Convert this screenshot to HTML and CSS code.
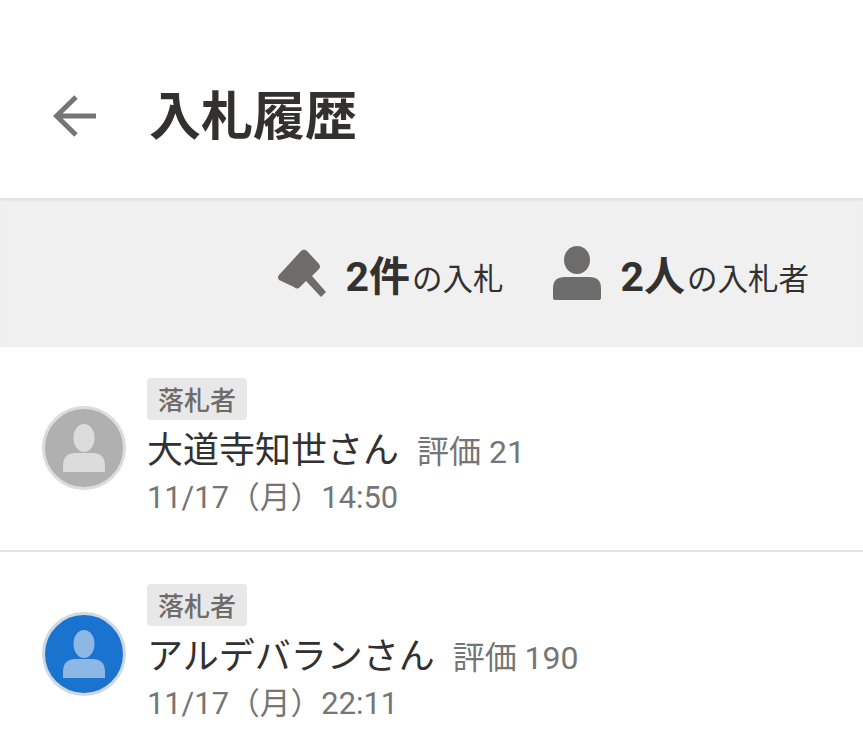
FILE: index.html
```html
<!DOCTYPE html>
<html lang="ja">
<head>
    <meta charset="UTF-8">
    <meta name="viewport" content="width=device-width, initial-scale=1.0">
    <title>入札履歴</title>
    <link rel="stylesheet" href="styles.css">
</head>
<body>

    <header class="header">
        <svg class="back" viewBox="0 0 44 42" aria-hidden="true">
            <path d="M23 2 3.500 21 23 40M3.500 21H43" fill="none" stroke="#757575" stroke-width="5"/>
        </svg>
        <h1>入札履歴</h1>
    </header>

    <section class="stats">
        <div class="stat">
            <svg class="stat-icon gavel" viewBox="0 0 48 50" aria-hidden="true">
                <path d="M1 27 23 3q3-3 6 0l12 13q2 3 0 5l-7 7 14 16-5 5-15-16-6 6q-3 3-6 0L1 32q-2-3 0-5z" fill="#6d6c6a"/>
            </svg>
            <span class="count">2件</span><span class="unit">の入札</span>
        </div>
        <div class="stat">
            <svg class="stat-icon person" viewBox="0 0 48 54" aria-hidden="true">
                <ellipse cx="24" cy="14" rx="13" ry="14" fill="#6d6c6a"/>
                <path d="M0 52V42q0-11 12-11h24q12 0 12 11v10q0 2-2 2H2q-2 0-2-2z" fill="#6d6c6a"/>
            </svg>
            <span class="count">2人</span><span class="unit">の入札者</span>
        </div>
    </section>

    <ul class="bids">
        <li class="bid">
            <div class="avatar avatar-grey">
                <svg viewBox="0 0 42 48" aria-hidden="true">
                    <ellipse cx="21" cy="14" rx="10.500" ry="14" fill="#dcdcdc"/>
                    <path d="M0 48v-6q0-13 13-13h16q13 0 13 13v6z" fill="#dcdcdc"/>
                </svg>
            </div>
            <div class="bid-body">
                <span class="badge">落札者</span>
                <p class="bidder">大道寺知世さん<span class="rating">評価 21</span></p>
                <p class="date">11/17（月）14:50</p>
            </div>
        </li>
        <li class="bid">
            <div class="avatar avatar-blue">
                <svg viewBox="0 0 42 48" aria-hidden="true">
                    <ellipse cx="21" cy="14" rx="10.500" ry="14" fill="#8db8e6"/>
                    <path d="M0 48v-6q0-13 13-13h16q13 0 13 13v6z" fill="#8db8e6"/>
                </svg>
            </div>
            <div class="bid-body">
                <span class="badge">落札者</span>
                <p class="bidder">アルデバランさん<span class="rating">評価 190</span></p>
                <p class="date">11/17（月）22:11</p>
            </div>
        </li>
    </ul>

</body>
</html>
```

FILE: styles.css
```css
* {
    box-sizing: border-box;
}

html, body {
    height: 100%;
}

body {
    margin: 0;
    overflow: hidden;
    background: #fff;
    color: #333130;
    font-family: Roboto, "Noto Sans CJK JP", sans-serif;
}

.header {
    display: flex;
    align-items: center;
    gap: 52px;
    height: 199px;
    padding: 38px 0 0 53px;
    border-bottom: 1px solid #e2e2e2;
}

.back {
    width: 44px;
    height: 42px;
    flex: none;
    margin-bottom: 5px;
}

h1 {
    margin: 0;
    font-size: 52px;
    font-weight: 700;
    line-height: 1.2;
}

.stats {
    display: flex;
    justify-content: flex-end;
    align-items: center;
    gap: 50px;
    height: 148px;
    padding: 0 54px 0 0;
    background: #f0f0f0;
    box-shadow: inset 0 3px 3px -2px #dcdcdc;
}

.stat {
    display: flex;
    align-items: center;
}

.stat-icon {
    flex: none;
    margin-right: 19px;
}

.gavel {
    width: 48px;
    height: 50px;
}

.person {
    width: 48px;
    height: 54px;
}

.count {
    font-size: 41px;
    font-weight: 700;
}

.unit {
    margin-left: 2px;
    padding-top: 8px;
    font-size: 30.5px;
}

.bids {
    list-style: none;
    margin: 0;
    padding: 0;
}

.bid {
    display: flex;
    align-items: center;
    gap: 21px;
    height: 205px;
    padding: 0 0 0 42px;
    border-bottom: 2px solid #e2e2e2;
}

.bid:last-child {
    border-bottom: none;
}

.avatar {
    display: flex;
    justify-content: center;
    align-items: center;
    flex: none;
    width: 84px;
    height: 84px;
    margin-bottom: 2px;
    border: 3px solid #dcdcdc;
    border-radius: 50%;
}

.avatar svg {
    width: 42px;
    height: 48px;
}

.avatar-grey {
    background: #b0b0b0;
}

.avatar-blue {
    background: #1a73cf;
    border-color: #cfd8e0;
}

.bid-body {
    display: flex;
    flex-direction: column;
    align-items: flex-start;
}

.badge {
    margin: -1px 0 1px;
    padding: 0 11px;
    height: 42px;
    border-radius: 4px;
    background: #e8e8e8;
    color: #6d6c6a;
    font-size: 26px;
    font-weight: 500;
    line-height: 47px;
}

.bidder {
    margin: 4px 0 0;
    font-size: 36px;
    line-height: 52px;
}

.rating {
    margin-left: 18px;
    color: #757575;
    font-size: 32px;
}

.date {
    margin: -1px 0 0;
    color: #757575;
    font-size: 30.8px;
    line-height: 42px;
}
```
